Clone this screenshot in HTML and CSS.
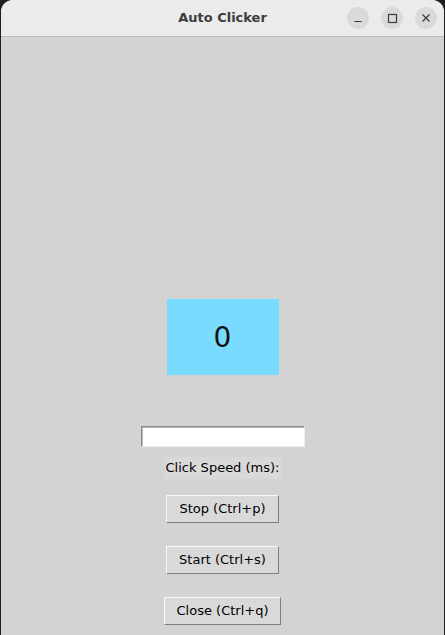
FILE: index.html
```html
<!DOCTYPE html>
<html>
<head>
<meta charset="utf-8">
<link rel="stylesheet" href="styles.css">
</head>
<body>
<div class="window">
  <div class="titlebar">
    <div class="title">Auto Clicker</div>
    <div class="controls">
      <span class="ctl"><svg width="22" height="22" viewBox="0 0 22 22"><line x1="7.5" y1="14.5" x2="14.5" y2="14.5" stroke="#3a3a3a" stroke-width="1.2"/></svg></span>
      <span class="ctl"><svg width="22" height="22" viewBox="0 0 22 22"><rect x="7.5" y="7.5" width="8" height="8" fill="none" stroke="#3a3a3a" stroke-width="1.2"/></svg></span>
      <span class="ctl"><svg width="22" height="22" viewBox="0 0 22 22"><path d="M7.5 7.5 L14.5 14.5 M14.5 7.5 L7.5 14.5" stroke="#3a3a3a" stroke-width="1.2"/></svg></span>
    </div>
  </div>
  <div class="content">
    <div class="counter">0</div>
    <input class="entry" type="text">
    <div class="label">Click Speed (ms):</div>
    <button class="btn btn-stop">Stop (Ctrl+p)</button>
    <button class="btn btn-start">Start (Ctrl+s)</button>
    <button class="btn btn-close">Close (Ctrl+q)</button>
  </div>
</div>
</body>
</html>
```
FILE: styles.css
```css
html, body {
  margin: 0;
  padding: 0;
  background: #1f1f1f;
  width: 445px;
  height: 635px;
  overflow: hidden;
}
.window {
  margin: 0 1px;
  width: 443px;
  height: 635px;
  background: #d3d3d3;
  border-radius: 12px 12px 0 0;
  overflow: hidden;
  display: flex;
  flex-direction: column;
}
.titlebar {
  position: relative;
  height: 36px;
  background: #ebebeb;
  border-bottom: 1px solid #bdbdbd;
  display: flex;
  align-items: center;
  justify-content: flex-end;
  flex-shrink: 0;
}
.title {
  position: absolute;
  left: 0;
  right: 0;
  top: 0;
  line-height: 36px;
  text-align: center;
  font-family: "DejaVu Sans", sans-serif;
  font-weight: bold;
  font-size: 13px;
  color: #3c3c3c;
}
.controls {
  position: relative;
  display: flex;
  gap: 12px;
  margin-right: 7px;
}
.ctl {
  width: 22px;
  height: 22px;
  border-radius: 50%;
  background: #dadada;
  display: block;
}
.ctl svg { display: block; }
.content {
  display: flex;
  flex-direction: column;
  align-items: center;
  font-family: "DejaVu Sans", sans-serif;
  font-size: 13px;
  color: #000;
}
.counter {
  margin-top: 262px;
  width: 112px;
  height: 76px;
  background: #79dbff;
  display: flex;
  align-items: center;
  justify-content: center;
  font-size: 28px;
  color: #111;
}
.entry {
  margin-top: 51px;
  width: 164px;
  height: 21px;
  box-sizing: border-box;
  background: #fff;
  border: 1px solid;
  border-color: #8a8a8a #efefef #efefef #8a8a8a;
  box-shadow: inset 1px 1px 0 #b5b5b5;
  padding: 0;
  outline: none;
}
.label {
  margin-top: 10px;
  background: #d9d9d9;
  padding: 3px 2px;
  line-height: 16px;
}
.btn {
  font-family: "DejaVu Sans", sans-serif;
  font-size: 13px;
  color: #000;
  background: #d9d9d9;
  border: 1px solid;
  border-color: #f7f7f7 #7f7f7f #7f7f7f #f7f7f7;
  padding: 5px 12px;
  line-height: 16px;
  height: 28px;
  box-sizing: border-box;
  margin: 0;
}
.btn-stop { margin-top: 16px; }
.btn-start { margin-top: 23px; }
.btn-close { margin-top: 23px; }
```
